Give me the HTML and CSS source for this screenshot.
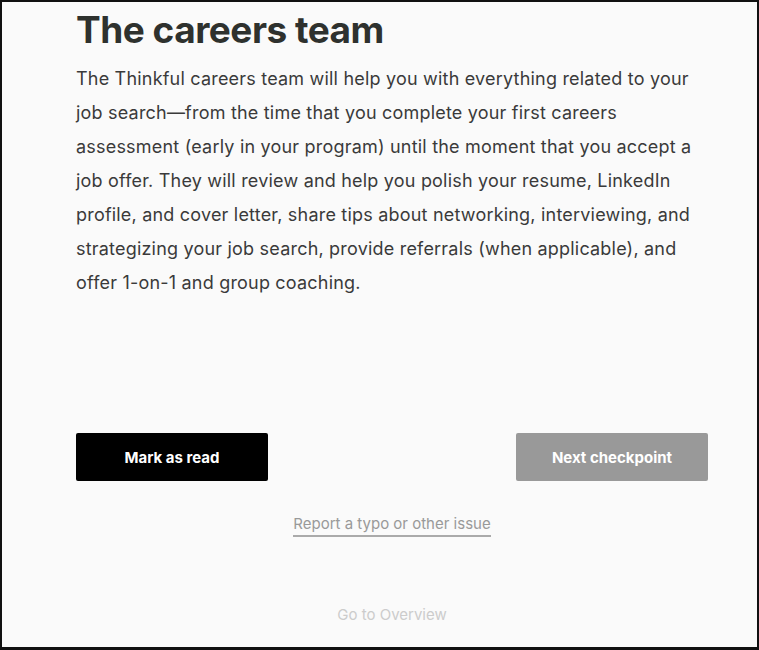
FILE: index.html
```html
<!DOCTYPE html>
<html>
<head>
<meta charset="utf-8">
<link rel="stylesheet" href="styles.css">
</head>
<body>
<div class="frame">
  <main class="content">
    <h1 class="title">The careers team</h1>
    <p class="body-text">The Thinkful careers team will help you with everything related to your job search—from the time that you complete your first careers assessment (early in your program) until the moment that you accept a job offer. They will review and help you polish your resume, LinkedIn profile, and cover letter, share tips about networking, interviewing, and strategizing your job search, provide referrals (when applicable), and offer 1-on-1 and group coaching.</p>
    <div class="actions">
      <button class="btn btn-dark">Mark as read</button>
      <button class="btn btn-grey">Next checkpoint</button>
    </div>
    <div class="report-row"><a class="report" href="#">Report a typo or other issue</a></div>
    <div class="overview-row"><a class="overview" href="#">Go to Overview</a></div>
  </main>
</div>
</body>
</html>
```
FILE: styles.css
```css
html, body {
  margin: 0;
  padding: 0;
  background: #fafafa;
}
.frame {
  box-sizing: border-box;
  width: 759px;
  height: 650px;
  border: 2px solid #111;
  border-bottom-width: 3px;
  background: #fafafa;
  overflow: hidden;
}
.content {
  width: 632px;
  margin-left: 74px;
  font-family: Inter, "Noto Sans", sans-serif;
}
.title {
  margin: 0;
  padding-top: 5px;
  font-size: 37px;
  line-height: 45px;
  font-weight: 700;
  color: #2e312e;
  letter-spacing: -0.5px;
}
.body-text {
  margin: 10px 0 0;
  font-size: 18px;
  line-height: 34px;
  color: #3a3a3a;
  letter-spacing: 0.2px;
}
.actions {
  display: flex;
  justify-content: space-between;
  margin-top: 133px;
}
.btn {
  width: 192px;
  height: 48px;
  border: none;
  border-radius: 2px;
  color: #fff;
  font-family: Inter, "Noto Sans", sans-serif;
  font-size: 15px;
  font-weight: 700;
}
.btn-dark { background: #000; }
.btn-grey { background: #999; }
.report-row {
  display: flex;
  justify-content: center;
  margin-top: 33px;
}
.report {
  color: #999;
  text-decoration: none;
  font-size: 15px;
  line-height: 20px;
  padding-bottom: 1px;
  border-bottom: 2px solid #aaa;
}
.overview-row {
  display: flex;
  justify-content: center;
  margin-top: 68px;
}
.overview {
  color: #ccc;
  text-decoration: none;
  font-size: 15px;
}
```
